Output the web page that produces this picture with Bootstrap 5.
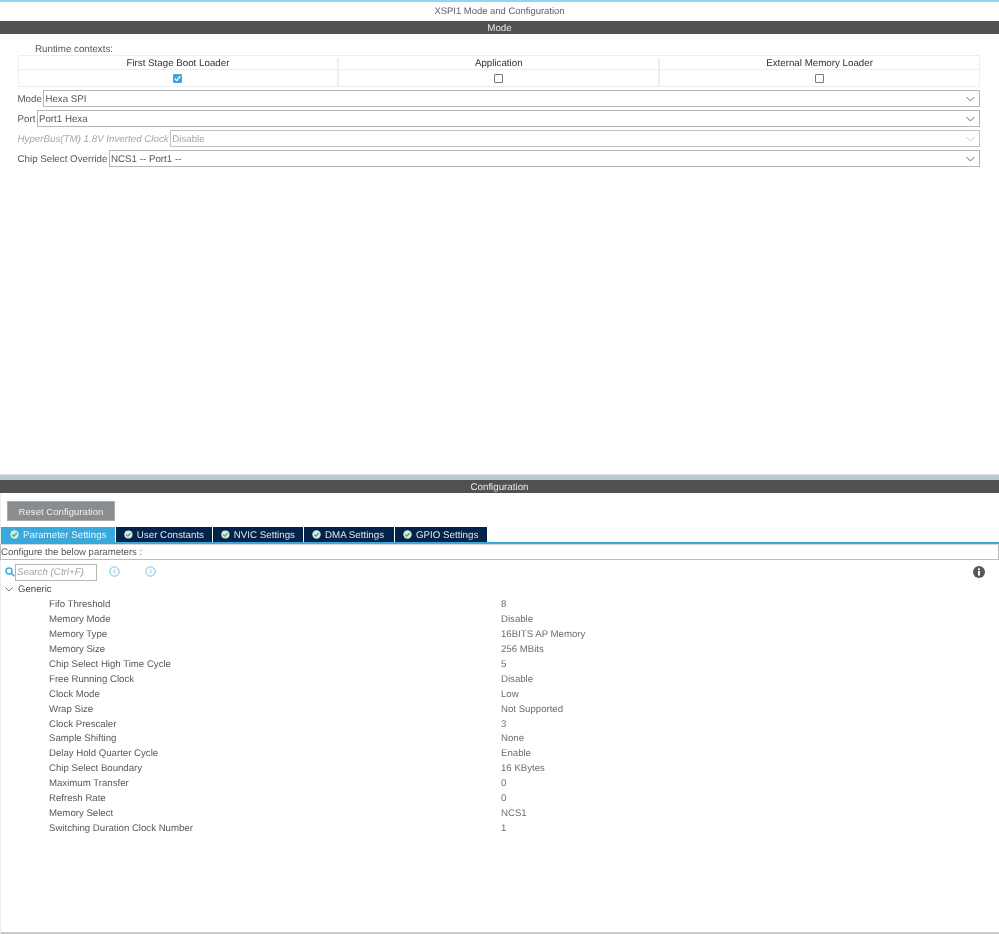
<!DOCTYPE html>
<html lang="en">
<head>
<meta charset="utf-8">
<title>XSPI1 Mode and Configuration</title>
<link href="https://cdn.jsdelivr.net/npm/bootstrap@5.3.0/dist/css/bootstrap.min.css" rel="stylesheet">
<style>
html,body{height:935px;overflow:hidden;}
body{font-family:"Liberation Sans",Arial,sans-serif;font-size:9.75px;text-rendering:geometricPrecision;color:#44474a;background:#fff;line-height:1;}
.shell{width:999px;height:935px;filter:blur(.3px);}
.topline{height:1.5px;background:#8fd6f0;}
.maintitle{height:19.5px;color:#5c6064;padding-top:1.5px;font-size:9.45px;}
.darkbar{height:13px;background:#505150;color:#e8e8e8;padding-top:2.5px;}
.modepane{height:440px;padding:0 19px 0 17.5px;}
.ctxlabel{height:21px;padding:10.5px 0 0 17.5px;color:#55585c;}
.ctxtable{border:1px solid #ecefef;height:32px;margin-bottom:3px;}
.ctxhead{height:14px;color:#2f3338;border-bottom:1px solid #ecefef;padding-top:2px;}
.ctxcell{flex:1 1 0;border-left:2px solid #ecefef;}
.ctxcell:first-child{border-left:0;}
.ctxbody{height:16px;}
.fakecheck{width:9px;height:9px;border:1px solid #77797b;background:#fff;border-radius:1px;}
.fakecheck.ison{background:#39a9dc;border-color:#39a9dc;}
.fieldrow{height:20px;padding-bottom:3px;color:#55585c;}
.fieldrow .fname{margin-right:1.5px;white-space:nowrap;padding-top:3px;}
.fieldbox{height:17px;border:1px solid #b4b6b8;border-bottom-width:1.5px;padding:0 4px 0 1px;color:#55585c;}
.fieldbox>span{padding-top:3px;}
.fieldrow.isoff,.fieldrow.isoff .fieldbox{color:#a4a6a8;}
.fieldrow.isoff .fieldbox{border-color:#c0c2c4;}
.fieldrow.isoff .fname{font-style:italic;}
.splitter{height:6px;background:#b9c9d1;border-top:1px solid #d8e0e4;}
.confpane{border-left:1px solid #eceeee;}
.resetwrap{height:34px;padding:8px 0 0 6px;}
.resetbtn{width:108px;height:20px;background:#8a8d90;border:1px solid #a9abad;border-radius:0;color:#eef0f1;font-size:9.6px;padding:2px 0 0;}
.tabstrip{height:15px;padding-left:0;gap:1px;}
.tabitem{height:15px;background:#03234b;color:#dfe5ec;gap:4px;padding:2px 8px 0 8px;white-space:nowrap;}
.tabitem.ison{background:#39a9dc;color:#e8f5fb;padding-left:9px;}
.tabitem svg{margin-top:-2px;}
.tabone{width:114px;}.tabtwo{width:96px;}.tabthree{width:90px;}.tabfour{width:90px;}.tabfive{width:92px;}
.tabline{height:2px;background:#39a9dc;}
.hintbar{height:16px;border:1px solid #b9bbbd;border-top-color:#d4d6d8;padding:2px 0 0;color:#55585c;font-size:9.55px;margin-left:-1px;}
.searchrow{height:22px;padding:3px 14px 0 4px;}
.searchrow svg{margin-bottom:2px;}
.searchbox{width:82px;height:17px;border:1px solid #b4b6b8;color:#a0a3a6;font-style:italic;padding:1px 0 0 1px;margin-left:0;}
.navspace{margin-left:12px;}
.navspace2{margin-left:25px;}
.treehead{height:15.5px;padding-left:4px;color:#44474a;gap:5px;font-size:9.6px;}
.paramrow{height:14.93px;font-size:9.65px;}
.pname{width:500px;padding-left:48px;color:#55585c;flex:none;}
.pval{color:#6a6d70;}
.bottomedge{height:2px;background:#c3ced2;}
.footgap{height:1px;}
</style>
</head>
<body>
<div class="shell d-flex flex-column">
  <div class="topline"></div>
  <div class="maintitle d-flex align-items-center justify-content-center">XSPI1 Mode and Configuration</div>
  <div class="darkbar d-flex align-items-center justify-content-center">Mode</div>

  <div class="modepane">
    <div class="ctxlabel">Runtime contexts:</div>
    <div class="ctxtable">
      <div class="ctxhead d-flex text-center">
        <div class="ctxcell d-flex align-items-center justify-content-center">First Stage Boot Loader</div>
        <div class="ctxcell d-flex align-items-center justify-content-center">Application</div>
        <div class="ctxcell d-flex align-items-center justify-content-center">External Memory Loader</div>
      </div>
      <div class="ctxbody d-flex">
        <div class="ctxcell d-flex align-items-center justify-content-center">
          <span class="fakecheck ison d-flex align-items-center justify-content-center">
            <svg width="7" height="7" viewBox="0 0 7 7"><path d="M.8 3.6 2.7 5.5 6.2 1.2" fill="none" stroke="#fff" stroke-width="1.2"/></svg>
          </span>
        </div>
        <div class="ctxcell d-flex align-items-center justify-content-center"><span class="fakecheck"></span></div>
        <div class="ctxcell d-flex align-items-center justify-content-center"><span class="fakecheck"></span></div>
      </div>
    </div>
    <div class="fieldrow d-flex align-items-center"><span class="fname">Mode</span>
      <div class="fieldbox flex-grow-1 d-flex align-items-center justify-content-between"><span>Hexa SPI</span><svg width="9" height="6" viewBox="0 0 9 6"><path d="M.5 1 4.5 5 8.5 1" fill="none" stroke="#6a6d70"/></svg></div></div>
    <div class="fieldrow d-flex align-items-center"><span class="fname">Port</span>
      <div class="fieldbox flex-grow-1 d-flex align-items-center justify-content-between"><span>Port1 Hexa</span><svg width="9" height="6" viewBox="0 0 9 6"><path d="M.5 1 4.5 5 8.5 1" fill="none" stroke="#6a6d70"/></svg></div></div>
    <div class="fieldrow isoff d-flex align-items-center"><span class="fname">HyperBus(TM) 1.8V Inverted Clock</span>
      <div class="fieldbox flex-grow-1 d-flex align-items-center justify-content-between"><span>Disable</span><svg width="9" height="6" viewBox="0 0 9 6"><path d="M.5 1 4.5 5 8.5 1" fill="none" stroke="#c4c6c8"/></svg></div></div>
    <div class="fieldrow d-flex align-items-center"><span class="fname">Chip Select Override</span>
      <div class="fieldbox flex-grow-1 d-flex align-items-center justify-content-between"><span>NCS1 -- Port1 --</span><svg width="9" height="6" viewBox="0 0 9 6"><path d="M.5 1 4.5 5 8.5 1" fill="none" stroke="#6a6d70"/></svg></div></div>
  </div>

  <div class="splitter"></div>
  <div class="darkbar d-flex align-items-center justify-content-center">Configuration</div>

  <div class="confpane flex-grow-1 d-flex flex-column">
    <div class="resetwrap"><button type="button" class="btn resetbtn d-block">Reset Configuration</button></div>
    <div class="tabstrip d-flex">
      <div class="tabitem tabone ison d-flex align-items-center"><svg width="9" height="9" viewBox="0 0 9 9"><circle cx="4.5" cy="4.5" r="4.2" fill="#d4eadc"/><path d="M2.3 4.6 3.9 6.1 6.7 3" fill="none" stroke="#39a07a" stroke-width="1.2"/></svg>Parameter Settings</div>
      <div class="tabitem tabtwo d-flex align-items-center"><svg width="9" height="9" viewBox="0 0 9 9"><circle cx="4.5" cy="4.5" r="4.2" fill="#d4eadc"/><path d="M2.3 4.6 3.9 6.1 6.7 3" fill="none" stroke="#39a07a" stroke-width="1.2"/></svg>User Constants</div>
      <div class="tabitem tabthree d-flex align-items-center"><svg width="9" height="9" viewBox="0 0 9 9"><circle cx="4.5" cy="4.5" r="4.2" fill="#d4eadc"/><path d="M2.3 4.6 3.9 6.1 6.7 3" fill="none" stroke="#39a07a" stroke-width="1.2"/></svg>NVIC Settings</div>
      <div class="tabitem tabfour d-flex align-items-center"><svg width="9" height="9" viewBox="0 0 9 9"><circle cx="4.5" cy="4.5" r="4.2" fill="#d4eadc"/><path d="M2.3 4.6 3.9 6.1 6.7 3" fill="none" stroke="#39a07a" stroke-width="1.2"/></svg>DMA Settings</div>
      <div class="tabitem tabfive d-flex align-items-center"><svg width="9" height="9" viewBox="0 0 9 9"><circle cx="4.5" cy="4.5" r="4.2" fill="#d4eadc"/><path d="M2.3 4.6 3.9 6.1 6.7 3" fill="none" stroke="#39a07a" stroke-width="1.2"/></svg>GPIO Settings</div>
    </div>
    <div class="tabline"></div>
    <div class="hintbar d-flex align-items-center">Configure the below parameters :</div>
    <div class="searchrow d-flex align-items-center">
      <svg width="10" height="10" viewBox="0 0 10 10"><circle cx="4" cy="4" r="3" fill="none" stroke="#39a9dc" stroke-width="1.4"/><path d="M6.3 6.3 9.3 9.3" stroke="#39a9dc" stroke-width="1.6"/></svg>
      <div class="searchbox d-flex align-items-center">Search (Ctrl+F)</div>
      <svg class="navspace" width="11" height="11" viewBox="0 0 11 11"><circle cx="5.5" cy="5.5" r="4.7" fill="none" stroke="#6cc0e6"/><path d="M6.4 3.4 4.3 5.5 6.4 7.6" fill="none" stroke="#6cc0e6"/></svg>
      <svg class="navspace2" width="11" height="11" viewBox="0 0 11 11"><circle cx="5.5" cy="5.5" r="4.7" fill="none" stroke="#6cc0e6"/><path d="M4.6 3.4 6.7 5.5 4.6 7.6" fill="none" stroke="#6cc0e6"/></svg>
      <svg class="ms-auto" width="12" height="12" viewBox="0 0 12 12"><circle cx="6" cy="6" r="6" fill="#55585b"/><rect x="5" y="5" width="2" height="4.6" fill="#fff"/><rect x="5" y="2.4" width="2" height="1.7" fill="#fff"/></svg>
    </div>
    <div class="treehead d-flex align-items-center"><svg width="8" height="5" viewBox="0 0 8 5"><path d="M.5.5 4 4 7.5.5" fill="none" stroke="#77797b"/></svg><span>Generic</span></div>
    <div class="flex-grow-1">
      <div class="paramrow d-flex align-items-center"><span class="pname">Fifo Threshold</span><span class="pval">8</span></div>
      <div class="paramrow d-flex align-items-center"><span class="pname">Memory Mode</span><span class="pval">Disable</span></div>
      <div class="paramrow d-flex align-items-center"><span class="pname">Memory Type</span><span class="pval">16BITS AP Memory</span></div>
      <div class="paramrow d-flex align-items-center"><span class="pname">Memory Size</span><span class="pval">256 MBits</span></div>
      <div class="paramrow d-flex align-items-center"><span class="pname">Chip Select High Time Cycle</span><span class="pval">5</span></div>
      <div class="paramrow d-flex align-items-center"><span class="pname">Free Running Clock</span><span class="pval">Disable</span></div>
      <div class="paramrow d-flex align-items-center"><span class="pname">Clock Mode</span><span class="pval">Low</span></div>
      <div class="paramrow d-flex align-items-center"><span class="pname">Wrap Size</span><span class="pval">Not Supported</span></div>
      <div class="paramrow d-flex align-items-center"><span class="pname">Clock Prescaler</span><span class="pval">3</span></div>
      <div class="paramrow d-flex align-items-center"><span class="pname">Sample Shifting</span><span class="pval">None</span></div>
      <div class="paramrow d-flex align-items-center"><span class="pname">Delay Hold Quarter Cycle</span><span class="pval">Enable</span></div>
      <div class="paramrow d-flex align-items-center"><span class="pname">Chip Select Boundary</span><span class="pval">16 KBytes</span></div>
      <div class="paramrow d-flex align-items-center"><span class="pname">Maximum Transfer</span><span class="pval">0</span></div>
      <div class="paramrow d-flex align-items-center"><span class="pname">Refresh Rate</span><span class="pval">0</span></div>
      <div class="paramrow d-flex align-items-center"><span class="pname">Memory Select</span><span class="pval">NCS1</span></div>
      <div class="paramrow d-flex align-items-center"><span class="pname">Switching Duration Clock Number</span><span class="pval">1</span></div>
    </div>
    <div class="bottomedge"></div>
    <div class="footgap"></div>
  </div>
</div>
<script src="https://cdn.jsdelivr.net/npm/bootstrap@5.3.0/dist/js/bootstrap.bundle.min.js"></script>
</body>
</html>
